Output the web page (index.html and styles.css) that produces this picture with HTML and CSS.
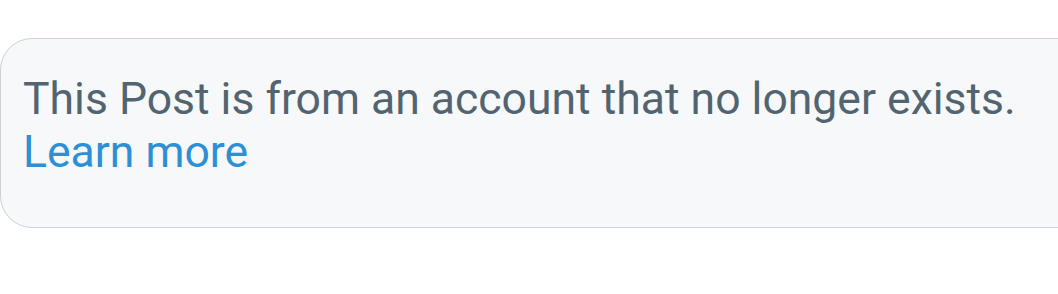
FILE: index.html
```html
<!DOCTYPE html>
<html lang="en">
<head>
    <meta charset="UTF-8">
    <meta name="viewport" content="width=device-width, initial-scale=1.0">
    <title>Unavailable Post</title>
    <link rel="stylesheet" href="styles.css">
</head>
<body>

    <div class="notice">
        <p class="notice-text">
            This Post is from an account that no longer exists.
            <a href="#" class="learn-more">Learn more</a>
        </p>
    </div>

</body>
</html>
```

FILE: styles.css
```css
body {
    margin: 0;
    padding-top: 38px;
    background: #fff;
    font-family: Roboto, "Noto Sans", Arial, sans-serif;
    overflow: hidden;
}
.notice {
    background: #f6f8f9;
    border: 1.5px solid #cbd1d6;
    border-radius: 32px;
    margin-right: -40px;
    height: 190px;
    box-sizing: border-box;
    padding: 34px 22px 0;
}
.notice-text {
    margin: 0;
    font-size: 44.5px;
    line-height: 53px;
    color: #536471;
}
.learn-more {
    display: block;
    color: #2d8fd6;
    text-decoration: none;
}
```
